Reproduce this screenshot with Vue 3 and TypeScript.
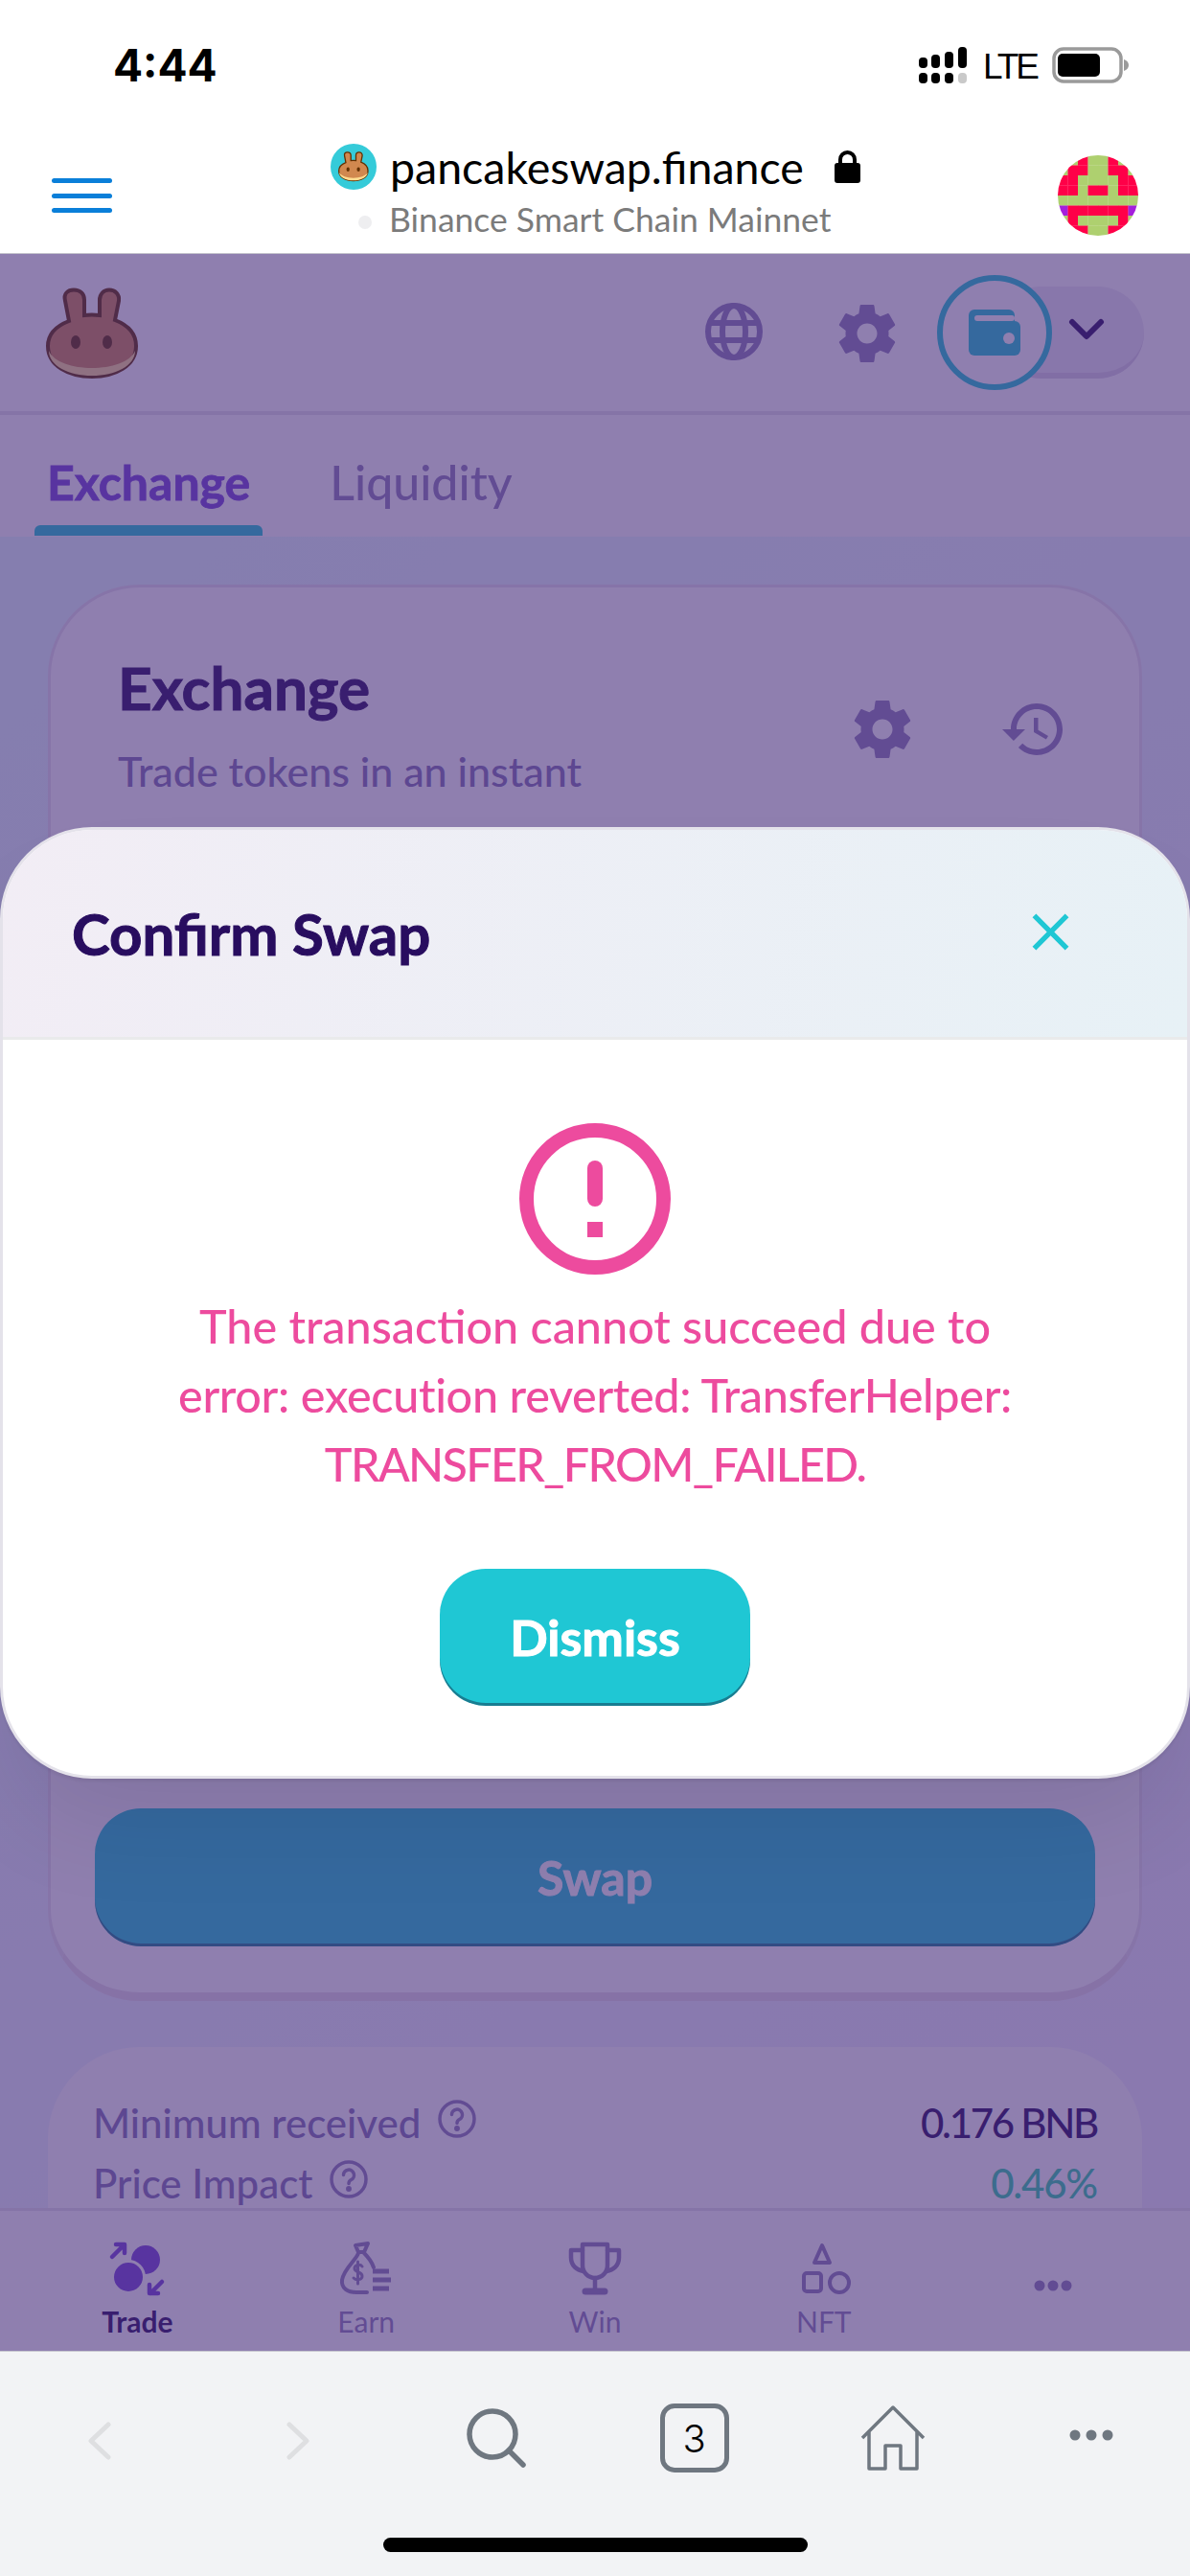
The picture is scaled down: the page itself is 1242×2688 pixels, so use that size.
<script setup lang="ts">
const G = '#aed06f'
const R = '#ff0048'
const P = '#a41fdc'
const pattern: string[] = [
  'GGRGGRGG',
  'GRRGGRRG',
  'RRGGGGRR',
  'RRGRRGRR',
  'GGGGGGGG',
  'PRRRRRRP',
  'GRGGGGRG',
  'GRRGGRRG',
]
const colours: Record<string, string> = { G, R, P }
const cells = pattern.flatMap((row, y) =>
  row.split('').map((c, x) => ({ x, y, fill: colours[c] })),
)
const gear =
  'M19.43 12.98c.04-.32.07-.64.07-.98s-.03-.66-.07-.98l2.11-1.65c.19-.15.24-.42.12-.64l-2-3.46c-.12-.22-.39-.3-.61-.22l-2.49 1c-.52-.4-1.08-.73-1.69-.98l-.38-2.65C14.46 2.18 14.25 2 14 2h-4c-.25 0-.46.18-.49.42l-.38 2.65c-.61.25-1.17.59-1.69.98l-2.49-1c-.23-.09-.49 0-.61.22l-2 3.46c-.13.22-.07.49.12.64l2.11 1.65c-.04.32-.07.65-.07.98s.03.66.07.98l-2.11 1.65c-.19.15-.24.42-.12.64l2 3.46c.12.22.39.3.61.22l2.49-1c.52.4 1.08.73 1.69.98l.38 2.65c.03.24.24.42.49.42h4c.25 0 .46-.18.49-.42l.38-2.65c.61-.25 1.17-.59 1.69-.98l2.49 1c.23.09.49 0 .61-.22l2-3.46c.12-.22.07-.49-.12-.64l-2.11-1.65zM12 15.5c-1.93 0-3.5-1.57-3.5-3.5s1.57-3.5 3.5-3.5 3.5 1.57 3.5 3.5-1.57 3.5-3.5 3.5z'
const bunnyBody =
  'M24 35 L20 14 C18 6 23 2.5 29 2.5 C36 2.5 40 7 40 13 V29 C43.5 28.5 52 28.5 56 29 V13 C56 7 60 2.5 66 2.5 C72 2.5 77 7 76 14 L72 34 C85 39 94 48 94 61 C94 82 72 93 48 93 C24 93 2 82 2 61 C2 48 11 40 24 35 Z'
const bunnyCake = 'M3 66 C8 78 28 84 48 84 C68 84 88 78 93 66 C93 82 72 92 48 92 C24 92 3 82 3 66Z'
</script>

<template>
  <div class="phone">
    <header class="chrome-top">
      <div class="status">
        <span class="time">4:44</span>
        <div class="status-right">
          <svg class="signal" width="52" height="38" viewBox="0 0 52 38">
            <rect x="1" y="11" width="9" height="11" rx="4" fill="#000" />
            <rect x="14" y="8" width="9" height="14" rx="4" fill="#000" />
            <rect x="28" y="5" width="9" height="17" rx="4" fill="#000" />
            <rect x="42" y="0" width="9" height="22" rx="4" fill="#000" />
            <rect x="1" y="27" width="9" height="11" rx="4" fill="#000" />
            <rect x="14" y="27" width="9" height="11" rx="4" fill="#000" />
            <rect x="28" y="27" width="9" height="11" rx="4" fill="#000" />
            <rect x="42" y="27" width="9" height="11" rx="4" fill="#c9c9c9" />
          </svg>
          <span class="lte">LTE</span>
          <svg class="battery" width="80" height="38" viewBox="0 0 80 38">
            <rect x="2" y="2" width="70" height="34" rx="10" fill="none" stroke="#9a9a9a" stroke-width="3.5" />
            <rect x="6" y="7" width="44" height="24" rx="5" fill="#000" />
            <path d="M75 13c3 1 5 3 5 6s-2 5-5 6z" fill="#9a9a9a" />
          </svg>
        </div>
      </div>
      <div class="urlbar">
        <div class="hamburger"><i></i><i></i><i></i></div>
        <div class="site">
          <div class="site-line">
            <svg class="favicon" width="48" height="48" viewBox="0 0 48 48">
              <circle cx="24" cy="24" r="24" fill="#35cbd9" />
              <g transform="translate(8 8) scale(.33)">
                <path :d="bunnyBody" fill="#d1884f" stroke="#633001" stroke-width="4" />
                <path :d="bunnyCake" fill="#fedc90" />
                <ellipse cx="31" cy="57" rx="5" ry="7" fill="#633001" />
                <ellipse cx="64" cy="57" rx="5" ry="7" fill="#633001" />
              </g>
            </svg>
            <span class="domain">pancakeswap.finance</span>
            <svg class="lock" width="27" height="34" viewBox="0 0 27 34">
              <path d="M6 15V9.500a7.500 7.500 0 0 1 15 0V15" fill="none" stroke="#000" stroke-width="4" />
              <rect x="0" y="13" width="27" height="21" rx="3" fill="#000" />
            </svg>
          </div>
          <div class="network"><i class="net-dot"></i><span>Binance Smart Chain Mainnet</span></div>
        </div>
        <svg class="avatar" width="84" height="84" viewBox="0 0 8 8">
          <defs><clipPath id="avatar-clip"><circle cx="4" cy="4" r="4" /></clipPath></defs>
          <g clip-path="url(#avatar-clip)">
            <rect v-for="c in cells" :key="c.x + '-' + c.y" :x="c.x" :y="c.y" width="1.02" height="1.02" :fill="c.fill" />
          </g>
        </svg>
      </div>
    </header>

    <section class="webview">
      <div class="topbar">
        <svg class="logo" width="96" height="96" viewBox="0 0 96 96">
          <path :d="bunnyBody" fill="#d1884f" stroke="#633001" stroke-width="4" />
          <path :d="bunnyCake" fill="#fedc90" />
          <ellipse cx="31" cy="57" rx="5" ry="7" fill="#633001" />
          <ellipse cx="64" cy="57" rx="5" ry="7" fill="#633001" />
        </svg>
        <svg class="globe" width="60" height="60" viewBox="0 0 60 60" fill="none" stroke="#8f80ba" stroke-width="6">
          <circle cx="30" cy="30" r="27" />
          <ellipse cx="30" cy="30" rx="12" ry="27" />
          <path d="M5 21h50M5 39h50" />
        </svg>
        <svg class="top-gear" width="72" height="72" viewBox="0 0 24 24"><path :d="gear" fill="#8f80ba" /></svg>
        <div class="wallet">
          <div class="wallet-pill">
            <svg width="40" height="24" viewBox="0 0 40 24" fill="none" stroke="#280d5f" stroke-width="6" stroke-linecap="round" stroke-linejoin="round">
              <path d="M5 4l15 15L35 4" />
            </svg>
          </div>
          <div class="wallet-ring">
            <svg width="54" height="48" viewBox="0 0 54 48">
              <rect x="0" y="0" width="48" height="30" rx="6" fill="#1fc7d4" />
              <rect x="0" y="12" width="54" height="36" rx="6" fill="#1fc7d4" />
              <rect x="6" y="6" width="42" height="6" rx="3" fill="#fff" />
              <circle cx="42" cy="30" r="6" fill="#fff" />
            </svg>
          </div>
        </div>
      </div>

      <nav class="tabs">
        <div class="tab active"><span>Exchange</span><i></i></div>
        <div class="tab"><span>Liquidity</span><i></i></div>
      </nav>

      <main class="content">
        <div class="swap-card">
          <div class="card-head">
            <div class="card-titles">
              <h2>Exchange</h2>
              <p>Trade tokens in an instant</p>
            </div>
            <div class="card-actions">
              <svg width="72" height="72" viewBox="0 0 24 24"><path :d="gear" fill="#8f80ba" /></svg>
              <svg width="72" height="72" viewBox="0 0 24 24">
                <path d="M13 3c-4.970 0-9 4.030-9 9H1l3.890 3.890.07.14L9 12H6c0-3.870 3.130-7 7-7s7 3.130 7 7-3.130 7-7 7c-1.930 0-3.680-.79-4.940-2.060l-1.420 1.420C8.270 19.990 10.510 21 13 21c4.970 0 9-4.030 9-9s-4.030-9-9-9zm-1 5v5l4.280 2.540.72-1.210-3.500-2.080V8H12z" fill="#8f80ba" />
              </svg>
            </div>
          </div>
          <div class="swap-btn">Swap</div>
        </div>
        <div class="details">
          <div class="row">
            <span class="row-label">Minimum received
              <svg class="help" width="40" height="40" viewBox="0 0 40 40" fill="none" stroke="#8f80ba" stroke-width="3.500">
                <circle cx="20" cy="20" r="18" />
                <path d="M14.500 15.500a5.500 5.500 0 1 1 8 5c-2 1-2.500 2-2.500 4" stroke-linecap="round" />
                <circle cx="20" cy="30" r="1.200" fill="#8f80ba" />
              </svg>
            </span>
            <span class="row-value">0.176 BNB</span>
          </div>
          <div class="row">
            <span class="row-label">Price Impact
              <svg class="help" width="40" height="40" viewBox="0 0 40 40" fill="none" stroke="#8f80ba" stroke-width="3.500">
                <circle cx="20" cy="20" r="18" />
                <path d="M14.500 15.500a5.500 5.500 0 1 1 8 5c-2 1-2.500 2-2.500 4" stroke-linecap="round" />
                <circle cx="20" cy="30" r="1.200" fill="#8f80ba" />
              </svg>
            </span>
            <span class="row-value good">0.46%</span>
          </div>
        </div>
      </main>

      <footer class="bottomnav">
        <div class="nav-item">
          <svg width="60" height="60" viewBox="0 0 60 60">
            <circle cx="39" cy="20" r="15" fill="#7645d9" />
            <circle cx="21" cy="38" r="16.500" fill="#7645d9" stroke="#fff" stroke-width="3" />
            <path d="M4 17L16 5M8 4h9v9M56 43L44 55M43 46v9h9" fill="none" stroke="#7645d9" stroke-width="4.500" stroke-linecap="round" stroke-linejoin="round" />
          </svg>
          <span class="strong">Trade</span>
        </div>
        <div class="nav-item">
          <svg width="60" height="60" viewBox="0 0 60 60" fill="none" stroke="#8f80ba" stroke-width="4" stroke-linecap="round" stroke-linejoin="round">
            <path d="M19 5l13-2-4 9h-6z" />
            <path d="M22 13C20 20 7 29 5 41c-1 9 6 13 15 13h11M28 13c4 4 8 9 10 15" />
            <path d="M26 27c-2-3-8-2-8 2 0 5 8 3 8 8 0 4-6 5-9 2M21.500 22v23" stroke-width="3" />
            <path d="M37 32h17M37 41h19M37 50h17" stroke-width="5" stroke-linecap="butt" />
          </svg>
          <span>Earn</span>
        </div>
        <div class="nav-item">
          <svg width="60" height="60" viewBox="0 0 60 60" fill="none" stroke="#8f80ba" stroke-width="4.500" stroke-linecap="round" stroke-linejoin="round">
            <path d="M17 4h26v22a13 13 0 0 1-26 0z" />
            <path d="M17 10H5v8c0 8 6 13 13 14M43 10h12v8c0 8-6 13-13 14M30 39v11" />
            <path d="M20 53h20" stroke-width="7" />
          </svg>
          <span>Win</span>
        </div>
        <div class="nav-item">
          <svg width="60" height="60" viewBox="0 0 60 60" fill="none" stroke="#8f80ba" stroke-width="4">
            <path d="M28 5l8 18H20z" stroke-linejoin="round" />
            <rect x="9" y="34" width="18" height="19" rx="3" />
            <circle cx="46" cy="44" r="10" />
          </svg>
          <span>NFT</span>
        </div>
        <div class="nav-item">
          <svg width="60" height="60" viewBox="0 0 60 60" fill="#8f80ba">
            <circle cx="16" cy="47" r="5.500" /><circle cx="30" cy="47" r="5.500" /><circle cx="44" cy="47" r="5.500" />
          </svg>
          <span class="empty">&nbsp;</span>
        </div>
      </footer>

      <div class="overlay">
        <div class="modal">
          <div class="modal-head">
            <h1>Confirm Swap</h1>
            <svg class="close" width="65" height="65" viewBox="0 0 24 24">
              <path d="M19 6.410L17.590 5 12 10.590 6.410 5 5 6.410 10.590 12 5 17.590 6.410 19 12 13.410 17.590 19 19 17.590 13.410 12z" fill="#1fc7d4" />
            </svg>
          </div>
          <div class="modal-body">
            <svg width="160" height="160" viewBox="0 0 160 160">
              <circle cx="80" cy="80" r="71.500" fill="none" stroke="#ed4b9e" stroke-width="15" />
              <rect x="72" y="40" width="16" height="48" rx="8" fill="#ed4b9e" />
              <rect x="72" y="104" width="16" height="16" fill="#ed4b9e" />
            </svg>
            <p class="error">The transaction cannot succeed due to<br /><span class="line-two">error: execution reverted: TransferHelper:</span><br /><span class="line-three">TRANSFER_FROM_FAILED.</span></p>
            <div class="dismiss">Dismiss</div>
          </div>
        </div>
      </div>
    </section>

    <footer class="chrome-bottom">
      <div class="tools">
        <div class="tool">
          <svg class="low" width="24" height="40" viewBox="0 0 24 40" fill="none" stroke="#dedfe1" stroke-width="5" stroke-linecap="round" stroke-linejoin="round"><path d="M21 3L3 20l18 17" /></svg>
        </div>
        <div class="tool">
          <svg class="low" width="24" height="40" viewBox="0 0 24 40" fill="none" stroke="#dedfe1" stroke-width="5" stroke-linecap="round" stroke-linejoin="round"><path d="M3 3l18 17L3 37" /></svg>
        </div>
        <div class="tool">
          <svg width="62" height="62" viewBox="0 0 62 62" fill="none" stroke="#6f7780" stroke-width="5.500" stroke-linecap="round">
            <circle cx="27" cy="27" r="24" /><path d="M44 44l15 15" />
          </svg>
        </div>
        <div class="tool">
          <div class="tabs-count">3</div>
        </div>
        <div class="tool">
          <svg width="68" height="68" viewBox="0 0 68 68" fill="none" stroke="#6f7780" stroke-width="3.500" stroke-linejoin="round">
            <path d="M2 34L34 2l32 32M9 27v39h17V42h16v24h17V27" />
          </svg>
        </div>
        <div class="tool">
          <svg class="high" width="46" height="12" viewBox="0 0 46 12" fill="#6f7780">
            <circle cx="6" cy="6" r="5.500" /><circle cx="23" cy="6" r="5.500" /><circle cx="40" cy="6" r="5.500" />
          </svg>
        </div>
      </div>
      <div class="home-indicator"></div>
    </footer>
  </div>
</template>

<style scoped>
.phone {
  width: 1242px;
  height: 2688px;
  display: flex;
  flex-direction: column;
  overflow: hidden;
  position: relative;
  font-family: Lato, "Noto Sans", sans-serif;
  background: #fff;
}
.chrome-top {
  height: 265px;
  flex: none;
  display: flex;
  flex-direction: column;
  border-bottom: 1px solid #c4c4cc;
  box-sizing: border-box;
}
.status {
  height: 120px;
  display: flex;
  align-items: flex-start;
  padding: 49px 64px 0 118px;
  box-sizing: border-box;
}
.time {
  font-family: Inter, sans-serif;
  font-weight: 700;
  font-size: 46px;
  line-height: 38px;
  color: #000;
}
.status-right {
  margin-left: auto;
  display: flex;
  align-items: center;
  height: 38px;
}
.signal { margin-right: 16px; }
.lte {
  font-family: "Liberation Sans", sans-serif;
  font-size: 37px;
  line-height: 38px;
  letter-spacing: -3px;
  color: #000;
  margin-top: 4px;
  margin-right: 16px;
}
.urlbar {
  height: 144px;
  display: flex;
  align-items: flex-start;
  padding: 0 54px;
}
.hamburger {
  width: 63px;
  margin-top: 66px;
  flex: none;
  display: flex;
  flex-direction: column;
  gap: 10.500px;
}
.hamburger i {
  display: block;
  height: 5px;
  border-radius: 3px;
  background: #0a7fd9;
}
.site {
  margin-left: 228px;
  width: 600px;
  flex: none;
}
.site-line {
  display: flex;
  align-items: center;
  height: 48px;
  margin-top: 30px;
}
.favicon { flex: none; }
.domain {
  margin-left: 14px;
  font-size: 46.500px;
  line-height: 48px;
  color: #000;
}
.lock { margin-left: 32px; margin-top: -1px; }
.network {
  display: flex;
  align-items: center;
  margin-top: 10px;
  height: 42px;
  color: #7b7b7b;
  font-size: 35.500px;
  line-height: 42px;
}
.net-dot {
  width: 14px;
  height: 14px;
  border-radius: 50%;
  background: #eeeef0;
  margin: 5px 18px 0 29px;
}
.avatar { margin-left: auto; margin-top: 42px; flex: none; }

.webview {
  flex: 1;
  min-height: 0;
  position: relative;
  display: flex;
  flex-direction: column;
  background: #fff;
}
.topbar {
  height: 168px;
  flex: none;
  box-sizing: border-box;
  border-bottom: 4px solid #e7e3eb;
  display: flex;
  align-items: flex-start;
  padding: 35px 48px 0 48px;
  background: #fff;
}
.globe { margin-left: auto; margin-top: 16px; }
.top-gear { margin-left: 73px; margin-top: 12px; }
.wallet {
  position: relative;
  width: 216px;
  height: 120px;
  margin-left: 37px;
  margin-top: -13px;
}
.wallet-pill {
  position: absolute;
  left: 60px;
  right: 0;
  top: 12px;
  height: 90px;
  border-radius: 48px;
  background: #eeeaf4;
  border-bottom: 6px solid #dcd5e6;
  display: flex;
  align-items: center;
  justify-content: flex-end;
  padding-right: 40px;
}
.wallet-ring {
  position: absolute;
  left: 0;
  top: 0;
  width: 120px;
  height: 120px;
  box-sizing: border-box;
  border: 6px solid #1fc7d4;
  border-radius: 50%;
  background: #fff;
  display: flex;
  align-items: center;
  justify-content: center;
}
.tabs {
  height: 127px;
  flex: none;
  display: flex;
  align-items: flex-end;
  padding-left: 36px;
  gap: 57px;
  background: #fff;
}
.tab {
  display: flex;
  flex-direction: column;
  height: 86px;
  color: #8f80ba;
  font-size: 50px;
  line-height: 60px;
  font-weight: 500;
  padding: 0 13px;
  position: relative;
}
.tab span { display: block; margin-bottom: 15px; margin-top: -1px; }
.tab i { height: 11px; margin: 0 -13px; border-radius: 6px 6px 0 0; }
.tab.active { color: #7645d9; font-weight: 700; -webkit-text-stroke: 0.8px currentColor; }
.tab.active i { background: #1fc7d4; }
.content {
  flex: 1;
  min-height: 0;
  overflow: hidden;
  background: linear-gradient(139.730deg, #e6fdff 0%, #f3efff 100%);
  padding: 50px 50px 0;
}
.swap-card {
  height: 1478px;
  box-sizing: border-box;
  background: #fff;
  border: 3px solid #e9e4ed;
  border-bottom: 9px solid #e9dfe9;
  border-radius: 96px;
  display: flex;
  flex-direction: column;
}
.card-head {
  display: flex;
  align-items: center;
  justify-content: space-between;
  padding: 68px 74px 0 70px;
}
.card-titles h2 {
  margin: 0;
  font-size: 62px;
  line-height: 72px;
  font-weight: 700;
  -webkit-text-stroke: 1px currentColor;
  color: #280d5f;
}
.card-titles p {
  margin: 22px 0 0;
  font-size: 43px;
  line-height: 60px;
  font-weight: 500;
  color: #8373b4;
}
.card-actions { display: flex; gap: 86px; margin-top: 6px; }
.swap-btn {
  margin: auto 46px 48px;
  height: 144px;
  box-sizing: border-box;
  border-radius: 48px;
  background: #1fc7d4;
  box-shadow: inset 0 -3px 0 rgba(14, 14, 44, 0.4);
  color: #fff;
  font-size: 50px;
  font-weight: 700;
  -webkit-text-stroke: 1px currentColor;
  display: flex;
  align-items: center;
  justify-content: center;
}
.details {
  margin-top: 48px;
  height: 500px;
  border-radius: 96px;
  background: #fff;
  padding: 49px 47px 0;
}
.row {
  display: flex;
  justify-content: space-between;
  height: 63px;
  font-size: 42px;
  line-height: 60px;
  font-weight: 500;
}
.row-label { color: #8373b4; display: flex; align-items: center; gap: 18px; height: 60px; }
.help { margin-top: -8px; }
.row-value { color: #280d5f; letter-spacing: -2.300px; }
.row-value.good { color: #31d0aa; letter-spacing: -1.200px; }
.bottomnav {
  height: 149px;
  flex: none;
  box-sizing: border-box;
  background: #fff;
  border-top: 3px solid #e7e3eb;
  padding: 0 24px;
  display: flex;
}
.nav-item {
  flex: 1;
  display: flex;
  flex-direction: column;
  align-items: center;
  padding-top: 31px;
  font-size: 30px;
  line-height: 36px;
  color: #8f80ba;
}
.nav-item svg { margin-bottom: 6px; }
.nav-item .strong { color: #280d5f; font-weight: 700; }
.overlay {
  position: absolute;
  inset: 0;
  background: rgba(69, 42, 122, 0.6);
  display: flex;
  align-items: center;
}
.modal {
  width: 100%;
  height: 993px;
  box-sizing: border-box;
  border: 3px solid #e4e2ea;
  border-radius: 96px;
  background: #fff;
  overflow: hidden;
  box-shadow: 0 60px 108px -24px rgba(14, 14, 44, 0.1), 0 3px 3px rgba(0, 0, 0, 0.05);
  display: flex;
  flex-direction: column;
}
.modal-head {
  height: 219px;
  flex: none;
  box-sizing: border-box;
  border-bottom: 3px solid #e9eaeb;
  background: linear-gradient(100deg, #f2edf5 0%, #e7f1f6 100%);
  display: flex;
  align-items: center;
  justify-content: space-between;
  padding: 0 110px 0 72px;
}
.modal-head h1 {
  margin: 0;
  font-size: 60px;
  line-height: 72px;
  font-weight: 700;
  -webkit-text-stroke: 1px currentColor;
  color: #280d5f;
}
.close { margin-top: -3px; }
.modal-body {
  display: flex;
  flex-direction: column;
  align-items: center;
  padding-top: 86px;
}
.error {
  margin: 16px 0 74px;
  color: #ed4b9e;
  font-size: 48.500px;
  font-weight: 500;
  line-height: 72px;
  text-align: center;
}
.line-two { letter-spacing: -0.330px; }
.line-three { letter-spacing: -1.700px; }
.dismiss {
  width: 324px;
  height: 143px;
  box-sizing: border-box;
  border-radius: 48px;
  background: #1fc7d4;
  box-shadow: inset 0 -3px 0 rgba(14, 14, 44, 0.4);
  color: #fff;
  font-size: 52px;
  font-weight: 700;
  -webkit-text-stroke: 1px currentColor;
  display: flex;
  align-items: center;
  justify-content: center;
}
.chrome-bottom {
  height: 235px;
  flex: none;
  box-sizing: border-box;
  background: #f2f3f5;
  border-top: 1px solid #c8c8d0;
  padding-top: 54px;
}
.tools { display: flex; height: 72px; }
.tool {
  flex: 1;
  display: flex;
  align-items: center;
  justify-content: center;
}
.low { margin-top: 6px; }
.high { margin-bottom: 6px; }
.tabs-count {
  width: 72px;
  height: 72px;
  box-sizing: border-box;
  border: 5px solid #6f7780;
  border-radius: 15px;
  font-family: Inter, sans-serif;
  font-size: 40px;
  font-weight: 300;
  color: #000;
  display: flex;
  align-items: center;
  justify-content: center;
}
.home-indicator {
  width: 443px;
  height: 15px;
  border-radius: 8px;
  background: #000;
  margin: 68px auto 0;
}
</style>
